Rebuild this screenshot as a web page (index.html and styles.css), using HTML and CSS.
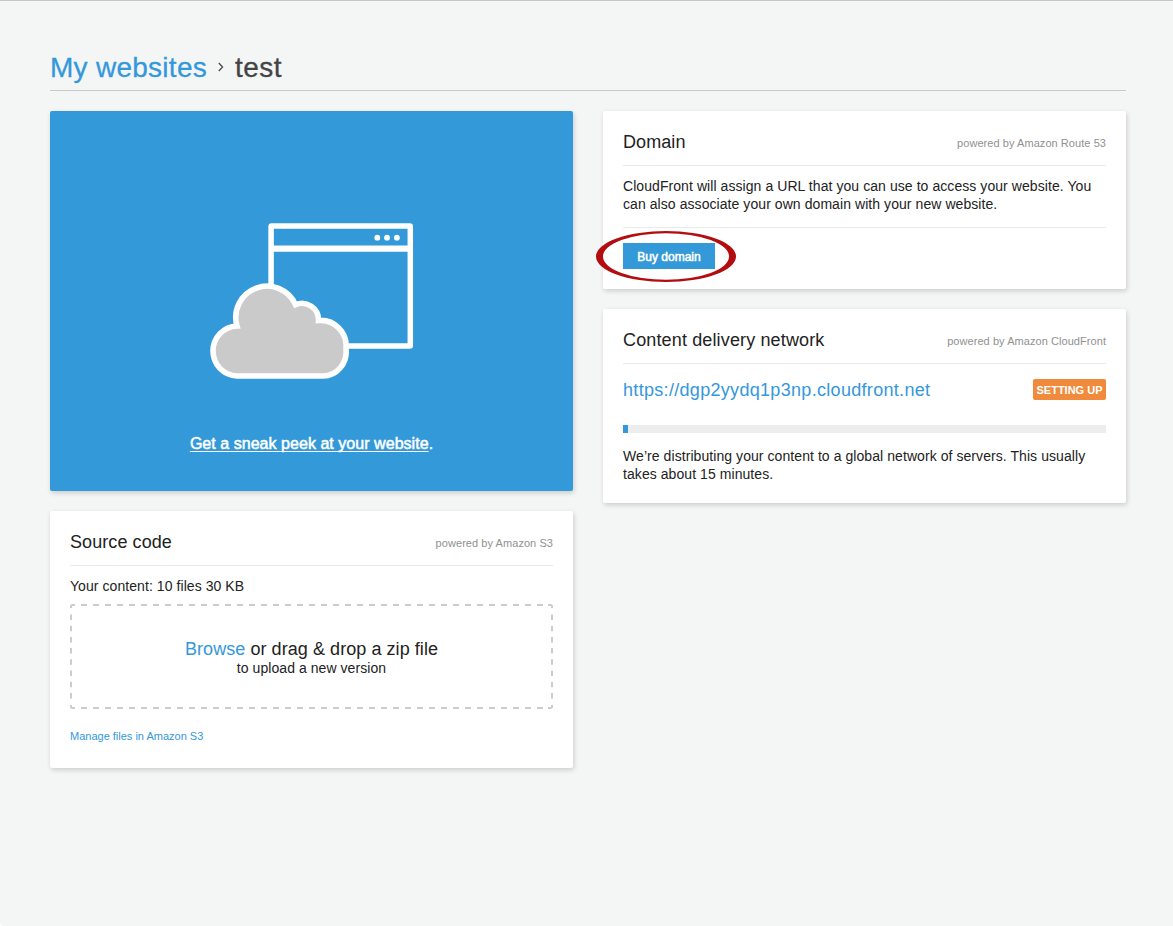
FILE: index.html
```html
<!DOCTYPE html>
<html lang="en">
<head>
<meta charset="utf-8">
<title>My websites › test</title>
<link rel="stylesheet" href="styles.css">
</head>
<body>
<div class="page">
  <header class="crumbs">
    <a class="crumbs-link" href="#">My websites</a>
    <svg class="crumbs-arrow" width="6" height="10" viewBox="0 0 6 10"><path d="M0.8 1L4.6 5L0.8 9" fill="none" stroke="#444" stroke-width="1.2"/></svg>
    <h1 class="crumbs-current">test</h1>
  </header>
  <main class="columns">
    <div class="column">
      <section class="preview">
        <svg class="preview-art" width="204" height="158" viewBox="210 222 204 158">
          <rect x="271.1" y="226" width="139.2" height="120.1" rx="0.5" fill="none" stroke="#fff" stroke-width="5.5"/>
          <path d="M271 248.6H410" stroke="#fff" stroke-width="6.2"/>
          <circle cx="377.3" cy="237.7" r="2.9" fill="#fff"/>
          <circle cx="387" cy="237.7" r="2.9" fill="#fff"/>
          <circle cx="396.9" cy="237.7" r="2.9" fill="#fff"/>
          <path d="M237 376H323A23 24.5 0 0 0 346 348.500A25.500 25.500 0 0 0 318.500 320.500A16.500 16.500 0 0 0 295.500 304.700A31.200 31.200 0 0 0 237 326A25 25 0 0 0 213 351A25 25 0 0 0 237 376Z" fill="#cacaca" stroke="#fff" stroke-width="5.600"/>
        </svg>
        <p class="preview-text"><a class="preview-link" href="#">Get a sneak peek at your website</a>.</p>
      </section>
      <section class="card source">
        <div class="card-head"><h2 class="card-title">Source code</h2><span class="powered">powered by Amazon S3</span></div>
        <p class="copy content-size">Your content: 10 files 30 KB</p>
        <div class="dropzone">
          <svg class="dropzone-border" width="483" height="105" viewBox="0 0 483 105" fill="none" stroke="#ccc" stroke-width="2">
            <path d="M11 1H478" stroke-dasharray="6 6"/>
            <path d="M11 104H478" stroke-dasharray="6 6"/>
            <path d="M1 10.500V98" stroke-dasharray="5.500 5.700"/>
            <path d="M482 10.500V98" stroke-dasharray="5.500 5.700"/>
            <path d="M1 4V2.500Q1 1 2.500 1H5M478 1H480.500Q482 1 482 2.500V4M482 101V102.500Q482 104 480.500 104H478M5 104H2.500Q1 104 1 102.500V101"/>
          </svg>
          <p class="dropzone-main"><a class="link" href="#">Browse</a> or drag &amp; drop a zip file</p>
          <p class="dropzone-sub">to upload a new version</p>
        </div>
        <a class="link manage" href="#">Manage files in Amazon S3</a>
      </section>
    </div>
    <div class="column">
      <section class="card domain">
        <div class="card-head"><h2 class="card-title">Domain</h2><span class="powered">powered by Amazon Route 53</span></div>
        <p class="copy domain-copy">CloudFront will assign a URL that you can use to access your website. You<br>can also associate your own domain with your new website.</p>
        <div class="actions">
          <a class="button" href="#">Buy domain
            <svg class="highlight" width="140" height="52" viewBox="0 0 140 52"><path fill="#b30d10" fill-rule="evenodd" d="M0 26.500A70 25.500 0 0 1 140 26.500A70 25.500 0 0 1 0 26.500ZM7 26.500A63 23.300 0 0 0 133 26.500A63 23.300 0 0 0 7 26.500Z"/></svg>
          </a>
        </div>
      </section>
      <section class="card cdn">
        <div class="card-head"><h2 class="card-title cdn-title">Content delivery network</h2><span class="powered">powered by Amazon CloudFront</span></div>
        <div class="endpoint"><a class="link url" href="#">https://dgp2yydq1p3np.cloudfront.net</a><span class="status">SETTING UP</span></div>
        <div class="progress"><div class="progress-fill" style="width: 5px"></div></div>
        <p class="copy cdn-copy">We’re distributing your content to a global network of servers. This usually<br>takes about 15 minutes.</p>
      </section>
    </div>
  </main>
</div>
</body>
</html>
```
FILE: styles.css
```css
* { box-sizing: border-box; }
html { background: #fff; }
body {
  margin: 0;
  font-family: "Liberation Sans", Arial, sans-serif;
  font-size: 14px;
  line-height: 18px;
  color: #222;
}
h1, h2, p { margin: 0; font-weight: normal; }
a { text-decoration: none; }
.page {
  height: 926px;
  padding: 44px 47px 0 50px;
  border-top: 1px solid #c6c8c8;
  border-bottom-left-radius: 4px;
  background: #f4f6f6;
}
.crumbs {
  display: flex;
  align-items: center;
  height: 46px;
  border-bottom: 1px solid #c8caca;
  font-size: 28px;
  line-height: 45px;
}
.crumbs-link {
  width: 157px;
  white-space: nowrap;
  letter-spacing: 0.27px;
  color: #3498db;
  -webkit-text-stroke: 0.3px #3498db;
}
.crumbs-arrow { margin: 0 11px 1px 11px; }
.crumbs-current {
  font-size: 28px;
  letter-spacing: 0.5px;
  color: #444;
  -webkit-text-stroke: 0.3px #444;
}
.columns {
  display: grid;
  grid-template-columns: 523px 523px;
  gap: 30px;
  align-items: start;
  padding-top: 20px;
}
.column { display: flex; flex-direction: column; gap: 20px; }
.preview, .card { border-radius: 2px; box-shadow: 1px 2px 5px rgba(0, 0, 0, 0.17); }
.preview {
  display: flex;
  flex-direction: column;
  align-items: center;
  height: 380px;
  padding-top: 111px;
  background: #3399d8;
}
.preview-art { display: block; }
.preview-text {
  margin-top: 54px;
  font-size: 16px;
  line-height: 20px;
  letter-spacing: 0.04px;
  color: #fff;
  white-space: nowrap;
  -webkit-text-stroke: 0.5px #fff;
}
.preview-link {
  color: #fff;
  text-decoration: underline;
  text-decoration-thickness: 1px;
  text-underline-offset: 2px;
  text-decoration-skip-ink: none;
}
.card { padding: 0 20px; background: #fff; }
.source { height: 257px; }
.domain { height: 178px; }
.cdn { height: 194px; }
.card-head {
  display: flex;
  justify-content: space-between;
  height: 55px;
  padding-top: 20px;
  border-bottom: 1px solid #eaeaea;
}
.card-title { font-size: 18px; line-height: 22px; letter-spacing: 0.08px; }
.cdn-title { letter-spacing: 0.14px; }
.powered { padding-top: 3px; font-size: 11px; letter-spacing: 0.06px; color: #919191; }
.copy { white-space: nowrap; letter-spacing: 0.068px; }
.content-size { padding-top: 11px; }
.link { color: #3498db; }
.dropzone {
  position: relative;
  height: 105px;
  margin-top: 9px;
  padding-top: 35px;
  text-align: center;
}
.dropzone-border { position: absolute; left: 0; top: 0; }
.dropzone-main { font-size: 18px; line-height: 20px; letter-spacing: 0.06px; }
.dropzone-sub { letter-spacing: 0.06px; }
.manage { display: block; margin-top: 18px; font-size: 11px; }
.domain-copy { padding-top: 11px; }
.actions { margin-top: 14px; padding-top: 15px; border-top: 1px solid #eaeaea; }
.button {
  display: block;
  position: relative;
  width: 92px;
  height: 26px;
  font-size: 12px;
  line-height: 28px;
  text-align: center;
  color: #fff;
  background: #3399d8;
  -webkit-text-stroke: 0.5px #fff;
}
.highlight { position: absolute; left: -27px; top: -13px; }
.endpoint {
  display: flex;
  justify-content: space-between;
  align-items: flex-start;
  padding-top: 15px;
}
.url { font-size: 18px; line-height: 22px; letter-spacing: 0.31px; }
.status {
  width: 73px;
  height: 21px;
  border-radius: 2px;
  font-size: 11px;
  font-weight: bold;
  line-height: 22px;
  text-align: center;
  white-space: nowrap;
  color: #fff;
  background: #f08a3c;
}
.progress { height: 8px; margin-top: 24px; background: #ededed; }
.progress-fill { height: 8px; background: #3498db; }
.cdn-copy { padding-top: 14px; }
```
